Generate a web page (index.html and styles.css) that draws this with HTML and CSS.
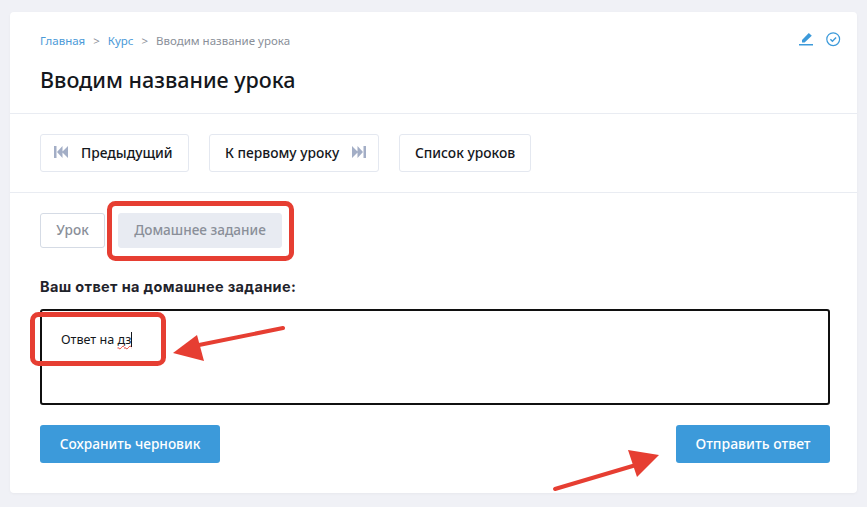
FILE: index.html
```html
<!DOCTYPE html>
<html lang="ru">
<head>
    <meta charset="UTF-8">
    <title>Вводим название урока</title>
    <meta name="viewport" content="width=device-width, initial-scale=1.0">
    <link rel="stylesheet" href="styles.css">
</head>
<body>
    <div class="card">
        <div class="lesson-head">
            <div class="crumbs-row">
                <div class="crumbs">
                    <a href="#">Главная</a>
                    <span class="sep">&gt;</span>
                    <a href="#">Курс</a>
                    <span class="sep">&gt;</span>
                    <span class="current">Вводим название урока</span>
                </div>
                <div class="head-icons">
                    <svg width="15" height="15" viewBox="0 0 15 15" aria-hidden="true">
                        <path d="M3 10.2 L3 8 L9.8 1 L12.8 3.8 L5.6 10.6 L3 10.6 Z" fill="#3c9ada"/>
                        <rect x="0" y="12" width="14" height="1.5" fill="#3c9ada"/>
                    </svg>
                    <svg width="15" height="15" viewBox="0 0 15 15" aria-hidden="true">
                        <circle cx="7.2" cy="7.2" r="6.4" fill="none" stroke="#3c9ada" stroke-width="1.2"/>
                        <path d="M4.4 7.3 L6.4 9.3 L10.1 5.6" fill="none" stroke="#3c9ada" stroke-width="1.4"/>
                    </svg>
                </div>
            </div>
            <h1>Вводим название урока</h1>
        </div>

        <div class="lesson-nav">
            <a class="nav-btn nav-prev" href="#">
                <svg class="nav-icon" width="14" height="12" viewBox="0 0 14 12" aria-hidden="true">
                    <path d="M0 0H2.5V12H0Z M8.5 0V12L3 6Z M14 0V12L8 6Z" fill="#a3aec6"/>
                </svg>
                Предыдущий
            </a>
            <a class="nav-btn nav-next" href="#">
                К первому уроку
                <svg class="nav-icon" width="14" height="12" viewBox="0 0 14 12" aria-hidden="true">
                    <path d="M14 0H11.5V12H14Z M5.5 0V12L11 6Z M0 0V12L6 6Z" fill="#a3aec6"/>
                </svg>
            </a>
            <a class="nav-btn nav-list" href="#">Список уроков</a>
        </div>

        <div class="lesson-body">
            <div class="tabs">
                <button class="tab">Урок</button>
                <button class="tab tab-active">Домашнее задание</button>
            </div>
            <div class="answer-label">Ваш ответ на домашнее задание:</div>
            <div class="answer-box">Ответ на <span class="typo">дз</span><span class="caret"></span></div>
            <div class="actions">
                <button class="btn-blue btn-draft">Сохранить черновик</button>
                <button class="btn-blue btn-send">Отправить ответ</button>
            </div>
        </div>
    </div>

    <!-- red marks drawn over the screenshot -->
    <svg class="marks" width="867" height="507" viewBox="0 0 867 507" aria-hidden="true">
        <rect x="109.5" y="203.5" width="182" height="55" rx="6" fill="none" stroke="#e63e32" stroke-width="5"/>
        <rect x="32.5" y="314.5" width="131" height="49" rx="6" fill="none" stroke="#e63e32" stroke-width="5"/>
        <path d="M283 328 L194 346" fill="none" stroke="#e63e32" stroke-width="4" stroke-linecap="round"/>
        <path d="M173 353 L197 335 L204 361 Z" fill="#e63e32"/>
        <path d="M555 489 L636 465" fill="none" stroke="#e63e32" stroke-width="4" stroke-linecap="round"/>
        <path d="M659 455 L628 450 L637 477 Z" fill="#e63e32"/>
    </svg>
</body>
</html>
```

FILE: styles.css
```css
body {
    margin: 0;
    padding: 12px 10px 14px;
    background-color: #f0f1f6;
    color: #14171c;
    font-family: 'Noto Sans', Arial, sans-serif;
    position: relative;
    height: 507px;
    box-sizing: border-box;
    overflow: hidden;
}

.card {
    background-color: white;
    border-radius: 4px;
    box-shadow: 0 1px 3px rgba(0, 0, 0, 0.04);
    height: 481px;
}

.lesson-head {
    padding: 20px 16px 0 30px;
    height: 81px;
    border-bottom: 1px solid #e9ecf2;
}

.crumbs-row {
    display: flex;
    justify-content: space-between;
    align-items: flex-start;
}

.crumbs {
    display: flex;
    gap: 8px;
    font-size: 11.5px;
    line-height: 18px;
}

.crumbs a {
    color: #4b9ad8;
    text-decoration: none;
}

.crumbs .sep,
.crumbs .current {
    color: #8a8f99;
}

.head-icons {
    display: flex;
    gap: 12px;
}

h1 {
    margin: 15px 0 0;
    font-size: 21.5px;
    line-height: 30px;
    font-weight: 500;
}

.lesson-nav {
    display: flex;
    gap: 20px;
    padding: 20px 30px;
    border-bottom: 1px solid #e9ecf2;
}

.nav-btn {
    display: flex;
    align-items: center;
    height: 38px;
    box-sizing: border-box;
    padding-bottom: 2px;
    border: 1px solid #e4e8f0;
    border-radius: 3px;
    color: #14171c;
    font-size: 13.8px;
    font-weight: 500;
    text-decoration: none;
}

.nav-prev {
    width: 149px;
    padding-left: 13px;
    gap: 13px;
}

.nav-next {
    width: 170px;
    padding-left: 15px;
    gap: 13px;
}

.nav-list {
    width: 132px;
    justify-content: center;
}

.lesson-body {
    padding: 20px 27px 0 30px;
}

.tabs {
    display: flex;
    gap: 13px;
}

.tab {
    width: 65px;
    height: 35px;
    padding: 0 0 2px;
    background-color: white;
    border: 1px solid #d5dbe5;
    border-radius: 3px;
    color: #8a8f99;
    font-family: inherit;
    font-size: 13.6px;
    font-weight: 500;
}

.tab-active {
    width: 164px;
    background-color: #e8ebf2;
    border-color: #e8ebf2;
}

.answer-label {
    margin-top: 29px;
    font-family: Inter, Arial, sans-serif;
    font-size: 14.5px;
    letter-spacing: 0.35px;
    line-height: 20px;
    font-weight: 700;
    color: #1f232b;
}

.answer-box {
    margin-top: 12px;
    height: 96px;
    box-sizing: border-box;
    padding: 19px;
    border: 2px solid #101010;
    border-radius: 3px;
    font-size: 12.6px;
    line-height: 20px;
    color: #14171c;
}

.typo {
    text-decoration: underline wavy #e63e32 1px;
    text-decoration-skip-ink: none;
}

.caret {
    display: inline-block;
    width: 1px;
    height: 15px;
    background-color: #14171c;
    vertical-align: -3px;
}

.actions {
    display: flex;
    justify-content: space-between;
    margin-top: 20px;
}

.btn-blue {
    height: 38px;
    padding: 0 0 2px;
    background-color: #3c9ada;
    border: none;
    border-radius: 3px;
    color: white;
    font-family: inherit;
    font-size: 13.7px;
    font-weight: 500;
}

.btn-draft {
    width: 180px;
}

.btn-send {
    width: 154px;
    font-size: 14px;
}

.marks {
    position: absolute;
    left: 0;
    top: 0;
    pointer-events: none;
}
```
